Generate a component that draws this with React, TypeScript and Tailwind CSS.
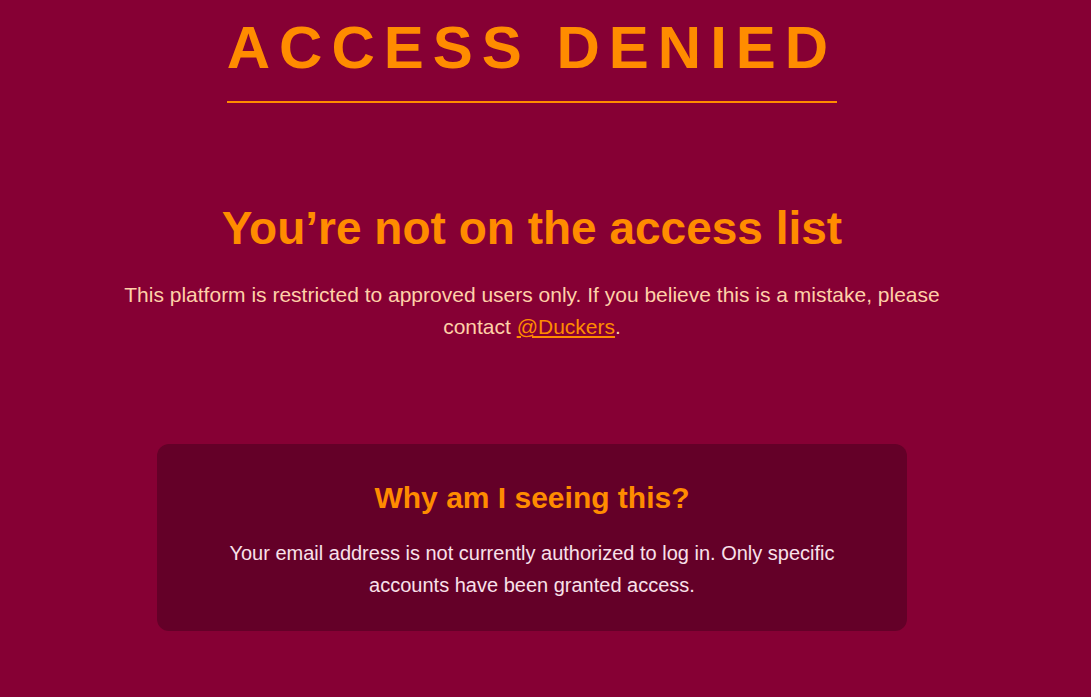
import React from 'react';

export default function App() {
  return (
    <div
      className="min-h-screen bg-[#860034] pr-[27px]"
      style={{ fontFamily: '"Liberation Sans", Arial, sans-serif' }}
    >
      <div className="flex flex-col items-center">
        {/* Title */}
        <h1 className="mt-[12px] inline-block border-b-2 border-[#ff8c00] pb-[17px] text-[60px] font-bold leading-[72px] tracking-[0.15em] text-[#ff8c00]">
          ACCESS DENIED
        </h1>

        {/* Main message */}
        <h2 className="mt-[99px] text-[46px] font-bold leading-[53px] text-[#ff8c00]">
          You’re not on the access list
        </h2>
        <p className="mt-[24px] max-w-[840px] text-center text-[21px] leading-[32px] text-[#ffd0a8]">
          This platform is restricted to approved users only. If you believe this is a mistake, please
          contact{' '}
          <a href="#" className="text-[#ff8c00] underline">
            @Duckers
          </a>
          .
        </p>

        {/* Info card */}
        <div className="mt-[101px] w-[750px] rounded-xl bg-[#640028] px-10 pb-[30px] pt-[36px] text-center">
          <h3 className="text-[30px] font-bold leading-[36px] text-[#ff8c00]">Why am I seeing this?</h3>
          <p className="mx-auto mt-[21px] max-w-[620px] text-[20px] leading-[32px] text-[#f9e1ea]">
            Your email address is not currently authorized to log in. Only specific accounts have been
            granted access.
          </p>
        </div>
      </div>
    </div>
  );
}
